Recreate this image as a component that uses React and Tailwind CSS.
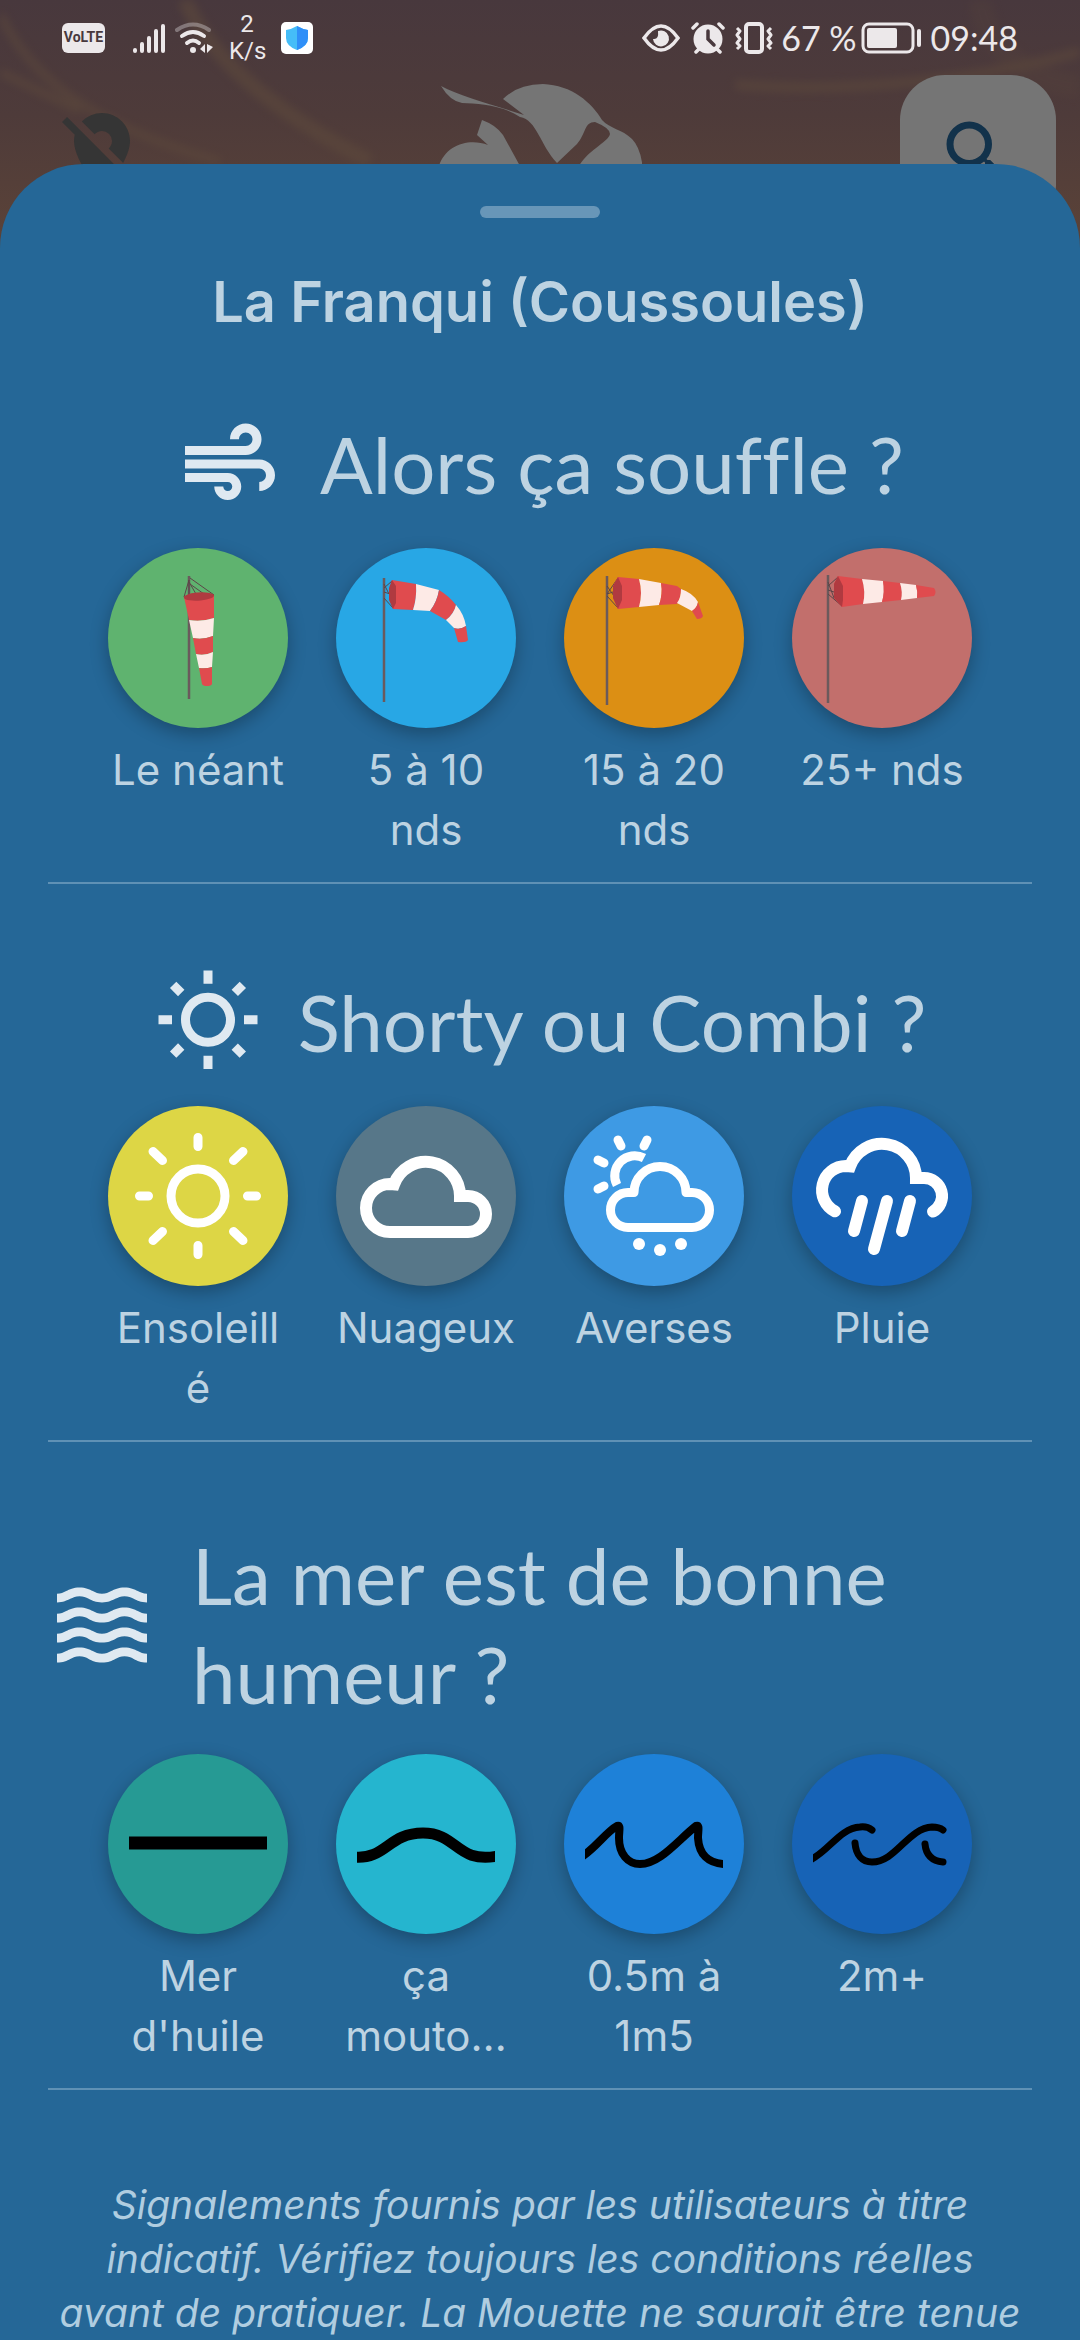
import { useState } from "react";
import { MdAir, MdLocationOff, MdOutlineWbSunny, MdSearch, MdWaves } from "react-icons/md";

const RED = "#e04b4e";
const CREAM = "#fdeae6";

function Sock({ pole, bands, mouth, ropes }) {
  return (
    <svg viewBox="0 0 180 180" className="size-full" aria-hidden="true">
      <path d={pole} stroke="#6b5a5c" strokeWidth="2.5" />
      <path d={ropes} stroke="#5d4548" strokeWidth="1" fill="none" />
      {bands.map((d, i) => (
        <path key={d} d={d} fill={i % 2 === 0 ? RED : CREAM} />
      ))}
      <path d={mouth} fill="#b03a40" />
    </svg>
  );
}

function SockNone() {
  return (
    <Sock
      pole="M81 28V151"
      ropes="M81 32L76 49M81 32L81 47M82 30L106 47M81 34L88 46M82 36L96 46"
      bands={[
        "M76 49L106 48L106 70Q94 74 81 72Z",
        "M81 72Q94 74 106 70L105 88Q95 92 85 90Z",
        "M85 90Q95 92 105 88L105 104Q97 108 88 106Z",
        "M88 106Q97 108 105 104L104 119Q98 121 91 120Z",
        "M91 120Q98 121 104 119L104 136Q103 138 99 138T94 136Z",
      ]}
      mouth="M76 50A15 4 -4 0 1 106 47A15 4 -4 0 1 76 50Z"
    />
  );
}

function SockLight() {
  return (
    <Sock
      pole="M48 30V154"
      ropes="M48 40L56 33M48 44L54 46M48 50L57 60M48 36L53 46"
      bands={[
        "M56 32L80 36Q81 50 77 62L57 61L53 46Z",
        "M80 36L103 42Q101 54 94 63L77 62Q81 50 80 36Z",
        "M103 42Q113 48 120 57Q118 66 110 72L94 63Q101 54 103 42Z",
        "M120 57Q128 66 130 78Q124 82 118 80L110 72Q118 66 120 57Z",
        "M130 78L132 92Q130 95 122 94L118 80Q124 82 130 78Z",
      ]}
      mouth="M56 32L60 38L60 55L57 61L53 52V40Z"
    />
  );
}

function SockMedium() {
  return (
    <Sock
      pole="M43 28V157"
      ropes="M43 46L54 30M43 46L49 44M43 48L54 60M43 38L50 48"
      bands={[
        "M54 29L75 31Q79 45 75 59L54 61L49 50V38Z",
        "M75 31L97 35Q99 46 95 57L75 59Q79 45 75 31Z",
        "M97 35L113 38L117 41Q117 50 113 56L95 57Q99 46 97 35Z",
        "M117 41Q129 45 134 54Q133 60 128 63L113 55Q117 50 117 41Z",
        "M134 54L139 68Q138 71 133 71L128 63Q133 60 134 54Z",
      ]}
      mouth="M54 29L58 38L58 52L54 61L49 50V38Z"
    />
  );
}

function SockStrong() {
  return (
    <Sock
      pole="M36 27V155"
      ropes="M36 38L46 29M36 42L42 44M36 46L50 58M36 34L42 50"
      bands={[
        "M46 28L70 31Q74 44 71 56L50 59L42 50V36Z",
        "M70 31L91 33Q93 44 90 54L71 56Q74 44 70 31Z",
        "M91 33L108 35Q111 44 109 52L90 54Q93 44 91 33Z",
        "M108 35L124 37Q126 44 125 50L109 52Q111 44 108 35Z",
        "M124 37L142 40Q145 44 142 48L125 50Q126 44 124 37Z",
      ]}
      mouth="M46 28L51 38L51 52L50 59L42 50V36Z"
    />
  );
}

function Sunny() {
  return (
    <svg viewBox="0 0 180 180" className="size-full" fill="none" stroke="#fff" strokeWidth="9" strokeLinecap="round" aria-hidden="true">
      <circle cx="90" cy="90" r="27" />
      <path d="M90 31.500V40.500M90 139.500V148.500M31.500 90H40.500M139.500 90H148.500M45 45.500L54.500 54.500M135 45.500L125.500 54.500M45 134.500L54.500 125.500M135 134.500L125.500 125.500" />
    </svg>
  );
}

function Cloudy() {
  return (
    <svg viewBox="0 0 180 180" className="size-full" fill="none" stroke="#fff" strokeWidth="12" aria-hidden="true">
      <path d="M54 126A24 24 0 0 1 54 78L58 78.400A34 34 0 0 1 124 90H132A18 18 0 0 1 132 126Z" />
    </svg>
  );
}

function Showers() {
  return (
    <svg viewBox="0 0 180 180" className="size-full" fill="none" stroke="#fff" strokeWidth="9" aria-hidden="true">
      <path d="M64 121.500A17.500 17.500 0 0 1 64 86.500H70A26 26 0 0 1 122 86.500H128A17.500 17.500 0 0 1 128 121.500Z" strokeLinejoin="round" />
      <path d="M80 52A20 20 0 0 0 53 79" />
      <path d="M54 34L57 40M83 34L80 40M34 54L40 57M34 83L40 80" strokeLinecap="round" />
      <g fill="#fff" stroke="none">
        <circle cx="75" cy="138" r="6" />
        <circle cx="96" cy="144" r="6" />
        <circle cx="117" cy="138" r="6" />
      </g>
    </svg>
  );
}

function Rain() {
  return (
    <svg viewBox="0 0 180 180" className="size-full" fill="none" stroke="#fff" strokeWidth="12" strokeLinecap="round" aria-hidden="true">
      <path d="M43 105.300A24 24 0 0 1 54 60L58 60.400A34 34 0 0 1 124 72H132A18 18 0 0 1 141 105.600" />
      <path d="M70 95L62 125M95 95L82 143M118 95L110 125" />
    </svg>
  );
}

function Sea({ d, width, round }) {
  return (
    <svg viewBox="0 0 180 180" className="size-full" aria-hidden="true">
      <svg x="21" y="0" width="138" height="180" viewBox="21 0 138 180">
        <path d={d} fill="none" stroke="#000" strokeWidth={width} strokeLinecap={round ? "round" : "butt"} strokeLinejoin="round" />
      </svg>
    </svg>
  );
}

const sections = [
  {
    id: "vent",
    title: "Alors ça souffle ?",
    Icon: MdAir,
    options: [
      { label: "Le néant", bg: "bg-[#5fb36f]", art: <SockNone /> },
      { label: "5 à 10 nds", bg: "bg-[#28a7e5]", art: <SockLight /> },
      { label: "15 à 20 nds", bg: "bg-[#dc8f14]", art: <SockMedium /> },
      { label: "25+ nds", bg: "bg-[#c26f6c]", art: <SockStrong /> },
    ],
  },
  {
    id: "meteo",
    title: "Shorty ou Combi ?",
    Icon: MdOutlineWbSunny,
    options: [
      { label: "Ensoleillé", bg: "bg-[#ddd645]", art: <Sunny /> },
      { label: "Nuageux", bg: "bg-[#577789]", art: <Cloudy /> },
      { label: "Averses", bg: "bg-[#3e9ae4]", art: <Showers /> },
      { label: "Pluie", bg: "bg-[#1763b6]", art: <Rain /> },
    ],
  },
  {
    id: "mer",
    title: "La mer est de bonne humeur ?",
    Icon: MdWaves,
    options: [
      { label: "Mer d'huile", bg: "bg-[#269a94]", art: <Sea width="13" d="M21 89H159" /> },
      { label: "ça mouto…", bg: "bg-[#25b5cf]", art: <Sea width="11" d="M18 103C50 106 52 79 87 79S120 110 162 102" /> },
      {
        label: "0.5m à 1m5",
        bg: "bg-[#1e81d8]",
        art: <Sea width="8" d="M16 104C32 94 42 78 53 72C57 71 55 76 55 84C55 100 64 110 76 110C96 110 114 86 132 72C136 71 134 76 134 84C135 100 144 110 162 110" />,
      },
      {
        label: "2m+",
        bg: "bg-[#1763b6]",
        art: <Sea width="7" round d="M18 106C36 98 48 74 68 73Q75 72 80 76M63 89C64 101 70 108 80 108C104 108 116 74 140 73Q147 73 151 76M133 90C134 101 140 107 151 108" />,
      },
    ],
  },
];

function Option({ option, selected, onSelect }) {
  return (
    <button type="button" aria-pressed={selected} onClick={onSelect} className="flex w-[180px] flex-col items-center">
      <span className={`block size-[180px] rounded-full shadow-[0_6px_18px_rgba(0,0,0,0.28)] ${option.bg}`}>{option.art}</span>
      <span className="mt-3 w-full text-center text-[42px] leading-[60px] wrap-break-word text-[#bdd3e2]">{option.label}</span>
    </button>
  );
}

function Section({ section, value, onChange }) {
  const { Icon } = section;
  return (
    <section className="border-b-2 border-[#5f91b5] pb-[22px]">
      <div className="flex items-center justify-center gap-9">
        <Icon className="size-[108px] shrink-0 text-[#dfe9f1]" />
        <h2 className="font-[Lato,cursive] text-[78px] leading-[99px] text-[#bdd3e2] [font-variant-ligatures:none]">{section.title}</h2>
      </div>
      <div className="mt-[30px] flex min-h-[312px] justify-center gap-12">
        {section.options.map((o) => (
          <Option key={o.label} option={o} selected={value === o.label} onSelect={() => onChange(o.label)} />
        ))}
      </div>
    </section>
  );
}

function StatusBar() {
  return (
    <div className="flex h-[75px] items-center justify-between px-[62px] text-[#ece8ea]">
      <div className="flex items-center">
        <span className="flex h-[30px] w-[43px] items-center justify-center rounded-md bg-[#ece8ea] font-[Roboto,sans-serif] text-[14px] font-bold text-[#48383d]">VoLTE</span>
        <svg viewBox="0 0 34 32" className="ml-7 h-8 w-[34px]" stroke="currentColor" strokeWidth="4" strokeLinecap="round">
          <path d="M2 28V29M9 22V29M16 16V29M23 9V29M30 4V29" />
        </svg>
        <svg viewBox="0 0 38 32" className="ml-2 h-8 w-[38px]" fill="none" stroke="currentColor" strokeWidth="4" strokeLinecap="round">
          <path d="M2 8Q18 -3 34 8" opacity="0.35" />
          <path d="M7 14Q18 6 29 14M12 21Q18 16 24 21" />
          <circle cx="18" cy="28" r="3" fill="currentColor" stroke="none" />
          <path d="M30 22V31L25 27ZM32 22V31L38 25Z" fill="currentColor" stroke="none" />
        </svg>
        <span className="ml-4 w-9 text-center font-[Roboto,sans-serif] text-[24px] leading-[27px]">
          2<br />K/s
        </span>
        <svg viewBox="0 0 32 32" className="ml-4 size-8">
          <rect width="32" height="32" rx="5" fill="#fff" />
          <path d="M16 4Q21 7 27 8V16Q27 24 16 28Q5 24 5 16V8Q11 7 16 4Z" fill="#45bdf8" />
          <path d="M16 4Q21 7 27 8V16Q27 24 16 28Z" fill="#2f8ff8" />
        </svg>
      </div>
      <div className="flex items-center font-[Lato,sans-serif] text-[34px] leading-none">
        <svg viewBox="0 0 38 28" className="h-7 w-[38px]" fill="none" stroke="currentColor" strokeWidth="3.5">
          <path d="M2 14Q19 -10 36 14Q19 38 2 14Z" />
          <path d="M16 7A8 8 0 1 1 11 15Q17 16 16 7Z" fill="currentColor" stroke="none" />
        </svg>
        <svg viewBox="0 0 34 32" className="ml-[11px] h-8 w-[34px]" fill="none" stroke="currentColor" strokeLinecap="round">
          <circle cx="17" cy="17" r="14.500" fill="currentColor" stroke="none" />
          <path d="M2 6L6 2M32 6L28 2M5 30L8 27M29 30L26 27" strokeWidth="3.500" />
          <path d="M17 9V17L23 23" stroke="#48383d" strokeWidth="3.500" />
        </svg>
        <svg viewBox="0 0 38 32" className="ml-[10px] h-8 w-[38px]" fill="none" stroke="currentColor" strokeWidth="3" strokeLinejoin="round">
          <rect x="11" y="2" width="16" height="28" rx="3" strokeWidth="4" />
          <path d="M2 6L5 9L2 13L5 17L2 21L5 24L2 27M36 6L33 9L36 13L33 17L36 21L33 24L36 27" />
        </svg>
        <span className="ml-2 whitespace-nowrap">67 %</span>
        <svg viewBox="0 0 62 32" className="ml-1 h-8 w-[62px]" fill="none" stroke="currentColor">
          <rect x="2" y="2" width="50" height="28" rx="6" strokeWidth="3" />
          <rect x="6" y="6" width="30" height="20" rx="2" fill="currentColor" stroke="none" />
          <path d="M58 9V23" strokeWidth="4" strokeLinecap="round" />
        </svg>
        <span className="ml-2">09:48</span>
      </div>
    </div>
  );
}

function Gull() {
  return (
    <svg viewBox="438 75 204 156" className="h-[156px] w-[204px]" fill="#757575" role="img" aria-label="La Mouette">
      <path d="M441 86C460 96 490 104 524 115L503 99Q518 84 543 84C572 85 592 103 602 120C610 129 622 129 632 139Q641 148 643 170H577C586 150 608 143 610 134Q610 128 595 122C584 122 586 134 577 144L557 163C540 145 537 120 520 117C500 104 478 104 462 103Q450 101 441 86Z" />
      <path d="M482 120L477 135L488 145C470 138 446 144 439 166H520L503 135Q496 125 482 120Z" />
    </svg>
  );
}

export default function App() {
  const [choix, setChoix] = useState({});

  return (
    <div className="relative h-screen overflow-hidden bg-[#5a4238] font-[Inter,sans-serif]">
      <header className="relative bg-linear-to-b from-[#48383d] via-[#4e3b3a] to-[#5a4238]">
        <svg viewBox="0 0 1080 240" preserveAspectRatio="none" className="absolute inset-0 size-full opacity-60 blur-[4px]" fill="none" stroke="#5d493c">
          <path d="M185 0C205 50 260 110 370 168" strokeWidth="15" />
          <path d="M0 15C30 80 90 130 220 168" strokeWidth="8" />
          <path d="M0 75L80 115" strokeWidth="8" />
          <path d="M735 88C860 98 990 80 1080 54" strokeWidth="10" />
          <path d="M980 0C985 50 1030 85 1080 90" strokeWidth="24" opacity="0.3" />
        </svg>
        <div className="relative">
          <StatusBar />
          <div className="flex justify-between px-6">
            <button type="button" aria-label="Localisation désactivée" className="flex size-[156px] items-center justify-center text-[#353535]">
              <MdLocationOff className="size-24" />
            </button>
            <Gull />
            <button type="button" aria-label="Rechercher" className="flex size-[156px] items-center justify-center rounded-[45px] bg-[#757575] text-[#12324b]">
              <MdSearch className="size-[84px]" />
            </button>
          </div>
        </div>
      </header>

      <main className="relative -mt-[67px] min-h-full rounded-t-[84px] bg-[#256797] px-12 pt-[42px]">
        <div className="mx-auto h-3 w-[120px] rounded-full bg-[#6896b8]" />
        <h1 className="mt-12 text-center text-[56px] leading-[72px] font-semibold text-[#bdd3e2]">La Franqui (Coussoules)</h1>

        <div className="mt-[72px] flex flex-col gap-[84px]">
          {sections.map((s) => (
            <Section key={s.id} section={s} value={choix[s.id]} onChange={(v) => setChoix({ ...choix, [s.id]: v })} />
          ))}
        </div>

        <p className="mt-[88px] text-center text-[39px] leading-[54px] whitespace-nowrap text-[#b0cde0] italic">
          Signalements fournis par les utilisateurs à titre
          <br />
          indicatif. Vérifiez toujours les conditions réelles
          <br />
          avant de pratiquer. La Mouette ne saurait être tenue
        </p>
      </main>
    </div>
  );
}
